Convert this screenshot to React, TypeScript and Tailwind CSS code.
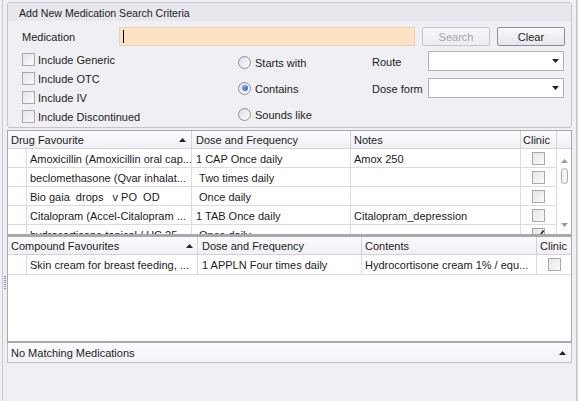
import React from "react";

const drugs = [
  { name: "Amoxicillin (Amoxicillin oral cap...", dose: "1 CAP Once daily", notes: "Amox 250", checked: false },
  { name: "beclomethasone (Qvar inhalat...", dose: "\u00a0Two times daily", notes: "", checked: false },
  { name: "Bio gaia  drops   v PO  OD", dose: "\u00a0Once daily", notes: "", checked: false },
  { name: "Citalopram (Accel-Citalopram ...", dose: "1 TAB Once daily", notes: "Citalopram_depression", checked: false },
  { name: "hydrocortisone topical / HC 25 ...", dose: "\u00a0Once daily", notes: "", checked: true },
];

const CheckBox = ({ checked = false }: { checked?: boolean }) => (
  <div className="relative w-[13px] h-[13px] border border-[#a9a8b2] bg-gradient-to-br from-[#e4e4ea] to-[#fbfbfd]">
    {checked ? (
      <svg className="absolute left-[1px] top-[0px]" width="11" height="11" viewBox="0 0 11 11">
        <path d="M2 6 L4.5 9 L9.5 1.5" stroke="#222" strokeWidth="1.6" fill="none" />
      </svg>
    ) : null}
  </div>
);

const Radio = ({ on = false }: { on?: boolean }) => (
  <div className="w-[13px] h-[13px] rounded-full border border-[#8f8e99] bg-gradient-to-br from-[#dcdce4] to-[#fdfdff] flex items-center justify-center">
    {on ? <div className="w-[6px] h-[6px] rounded-full bg-gradient-to-br from-[#8fb4f0] to-[#2a5fc8]" /> : null}
  </div>
);

const SortUp = () => (
  <svg width="7" height="4" viewBox="0 0 7 4">
    <path d="M0 4 L3.5 0 L7 4 Z" fill="#222" />
  </svg>
);

const DropArrow = () => (
  <svg width="7" height="4" viewBox="0 0 7 4">
    <path d="M0 0 L7 0 L3.5 4 Z" fill="#222" />
  </svg>
);

const Combo = () => (
  <div className="w-[136px] h-[20px] bg-white border border-[#b3b2bc] flex items-center justify-end pr-[4px]">
    <DropArrow />
  </div>
);

// text sits a touch low in the original (Tahoma), so nudge labels down
const txt = "pt-[2px]";

export default function App() {
  return (
    <div className="w-[579px] h-[401px] bg-[#f0eff4] flex overflow-hidden font-['Liberation_Sans',Arial,sans-serif] text-[11px] text-[#1b1b1b] leading-none">
      {/* left splitter strip */}
      <div className="w-[7px] h-full flex">
        <div className="w-[2px]" />
        <div className="w-[1px] h-full bg-[#c9c8d0]" />
        <div className="flex-1 flex flex-col items-center pt-[276px] gap-[1px]">
          {Array.from({ length: 7 }).map((_, i) => (
            <div key={i} className="w-[2px] h-[1px] bg-[#8f8e98]" />
          ))}
        </div>
      </div>

      {/* main column */}
      <div className="w-[565px] h-full flex flex-col">
        {/* search criteria group */}
        <div className="mt-[2px] h-[126px] border border-[#c6c5cd] rounded-[3px] flex flex-col overflow-hidden">
          <div className={`h-[19px] bg-[#e8e7ee] pl-[11px] flex items-center text-[10.6px] ${txt}`}>
            Add New Medication Search Criteria
          </div>
          <div className="flex items-center mt-[6px] h-[19px]">
            <div className={`w-[111px] pl-[14px] ${txt}`}>Medication</div>
            <div className="w-[296px] h-[19px] bg-[#fde3c4] border border-[#e8d2b6] flex items-center pl-[3px]">
              <div className="w-[1px] h-[13px] bg-black" />
            </div>
            <div className={`ml-[7px] w-[68px] h-[19px] rounded-[2px] border border-[#c4c3cc] bg-gradient-to-b from-[#f8f8fa] to-[#ececf1] flex items-center justify-center text-[#a4a3ac] ${txt}`}>
              Search
            </div>
            <div className={`ml-[7px] w-[68px] h-[19px] rounded-[2px] border border-[#8e8d97] bg-gradient-to-b from-[#fafafc] to-[#e6e5ec] flex items-center justify-center ${txt}`}>
              Clear
            </div>
          </div>
          <div className="flex items-start">
            <div className="w-[230px] pl-[14px] mt-[4px] flex flex-col">
              {["Include Generic", "Include OTC", "Include IV", "Include Discontinued"].map((t) => (
                <div key={t} className="h-[19px] flex items-center gap-[3px]">
                  <CheckBox />
                  <span className={txt}>{t}</span>
                </div>
              ))}
            </div>
            <div className="w-[134px] mt-[3px] flex flex-col">
              {[
                ["Starts with", false],
                ["Contains", true],
                ["Sounds like", false],
              ].map(([t, on]) => (
                <div key={t as string} className="h-[26px] flex items-center gap-[4px]">
                  <Radio on={on as boolean} />
                  <span className={txt}>{t as string}</span>
                </div>
              ))}
            </div>
            <div className="mt-[5px] flex flex-col gap-[7px]">
              <div className="flex items-center">
                <div className={`w-[56px] ${txt}`}>Route</div>
                <Combo />
              </div>
              <div className="flex items-center">
                <div className={`w-[56px] ${txt}`}>Dose form</div>
                <Combo />
              </div>
            </div>
          </div>
        </div>

        {/* drug favourites grid */}
        <div className="mt-[2px] h-[104px] border-x border-t border-[#a9a8b1] bg-white flex flex-col overflow-hidden">
          <div className="h-[18px] shrink-0 flex bg-gradient-to-b from-[#fbfbfd] to-[#f1f0f5] border-b border-[#d3d2da]">
            <div className="w-[184px] border-r border-[#d3d2da] pl-[3px] pr-[5px] flex items-center justify-between">
              <span className={txt}>Drug Favourite</span>
              <SortUp />
            </div>
            <div className={`w-[159px] border-r border-[#d3d2da] pl-[4px] flex items-center ${txt}`}>Dose and Frequency</div>
            <div className={`w-[170px] border-r border-[#d3d2da] pl-[3px] flex items-center ${txt}`}>Notes</div>
            <div className={`w-[36px] border-r border-[#d3d2da] pl-[2px] flex items-center ${txt}`}>Clinic</div>
            <div className="flex-1" />
          </div>
          <div className="flex-1 flex overflow-hidden">
            <div className="w-[549px] flex flex-col">
              {drugs.map((d) => (
                <div key={d.name} className="h-[19px] shrink-0 flex border-b border-[#dcdbe2]">
                  <div className="w-[19px] border-r border-[#dcdbe2]" />
                  <div className={`w-[165px] border-r border-[#dcdbe2] pl-[3px] flex items-center whitespace-pre overflow-hidden ${txt}`}>{d.name}</div>
                  <div className={`w-[159px] border-r border-[#dcdbe2] pl-[4px] flex items-center whitespace-pre ${txt}`}>{d.dose}</div>
                  <div className={`w-[170px] border-r border-[#dcdbe2] pl-[3px] flex items-center ${txt}`}>{d.notes}</div>
                  <div className="w-[36px] border-r border-[#dcdbe2] flex items-center justify-center">
                    <CheckBox checked={d.checked} />
                  </div>
                </div>
              ))}
            </div>
            <div className="flex-1 flex flex-col items-center pt-[10px]">
              <svg width="7" height="4" viewBox="0 0 7 4">
                <path d="M0 4 L3.5 0 L7 4 Z" fill="#9a99a3" />
              </svg>
              <div className="mt-[5px] w-[7px] h-[16px] rounded-full border border-[#a9a8b2] bg-[#f6f6f9]" />
              <div className="flex-1" />
              <svg className="mb-[7px]" width="7" height="4" viewBox="0 0 7 4">
                <path d="M0 0 L7 0 L3.5 4 Z" fill="#9a99a3" />
              </svg>
            </div>
          </div>
        </div>

        {/* splitter */}
        <div className="h-[3px] bg-[#a9a8b1]" />

        {/* compound favourites grid */}
        <div className="h-[104px] border-x border-[#a9a8b1] bg-white flex flex-col">
          <div className="h-[18px] flex bg-gradient-to-b from-[#fbfbfd] to-[#f1f0f5] border-b border-[#d3d2da]">
            <div className="w-[190px] border-r border-[#d3d2da] pl-[3px] pr-[4px] flex items-center justify-between">
              <span className={txt}>Compound Favourites</span>
              <SortUp />
            </div>
            <div className={`w-[164px] border-r border-[#d3d2da] pl-[4px] flex items-center ${txt}`}>Dose and Frequency</div>
            <div className={`w-[175px] border-r border-[#d3d2da] pl-[3px] flex items-center ${txt}`}>Contents</div>
            <div className={`flex-1 pl-[3px] flex items-center ${txt}`}>Clinic</div>
          </div>
          <div className="h-[20px] flex border-b border-[#dcdbe2]">
            <div className="w-[19px] border-r border-[#dcdbe2]" />
            <div className={`w-[171px] border-r border-[#dcdbe2] pl-[3px] flex items-center ${txt}`}>Skin cream for breast feeding, ...</div>
            <div className={`w-[164px] border-r border-[#dcdbe2] pl-[4px] flex items-center ${txt}`}>1 APPLN Four times daily</div>
            <div className={`w-[175px] border-r border-[#dcdbe2] pl-[3px] flex items-center ${txt}`}>Hydrocortisone cream 1% / equ...</div>
            <div className="flex-1 flex items-center justify-center">
              <CheckBox />
            </div>
          </div>
        </div>

        {/* status bar */}
        <div className="h-[2px] bg-[#a9a8b1]" />
        <div className="h-[20px] border-x border-b border-[#c3c2ca] bg-gradient-to-b from-[#fcfbfe] to-[#f3f2f7] flex items-center justify-between pl-[3px] pr-[5px]">
          <span className={txt}>No Matching Medications</span>
          <SortUp />
        </div>
      </div>

      {/* right frame strip */}
      <div className="w-[7px] h-full flex">
        <div className="w-[4px]" />
        <div className="w-[1px] h-full bg-[#bdbcc4]" />
        <div className="w-[1px] h-full bg-[#e6e5eb]" />
      </div>
    </div>
  );
}
